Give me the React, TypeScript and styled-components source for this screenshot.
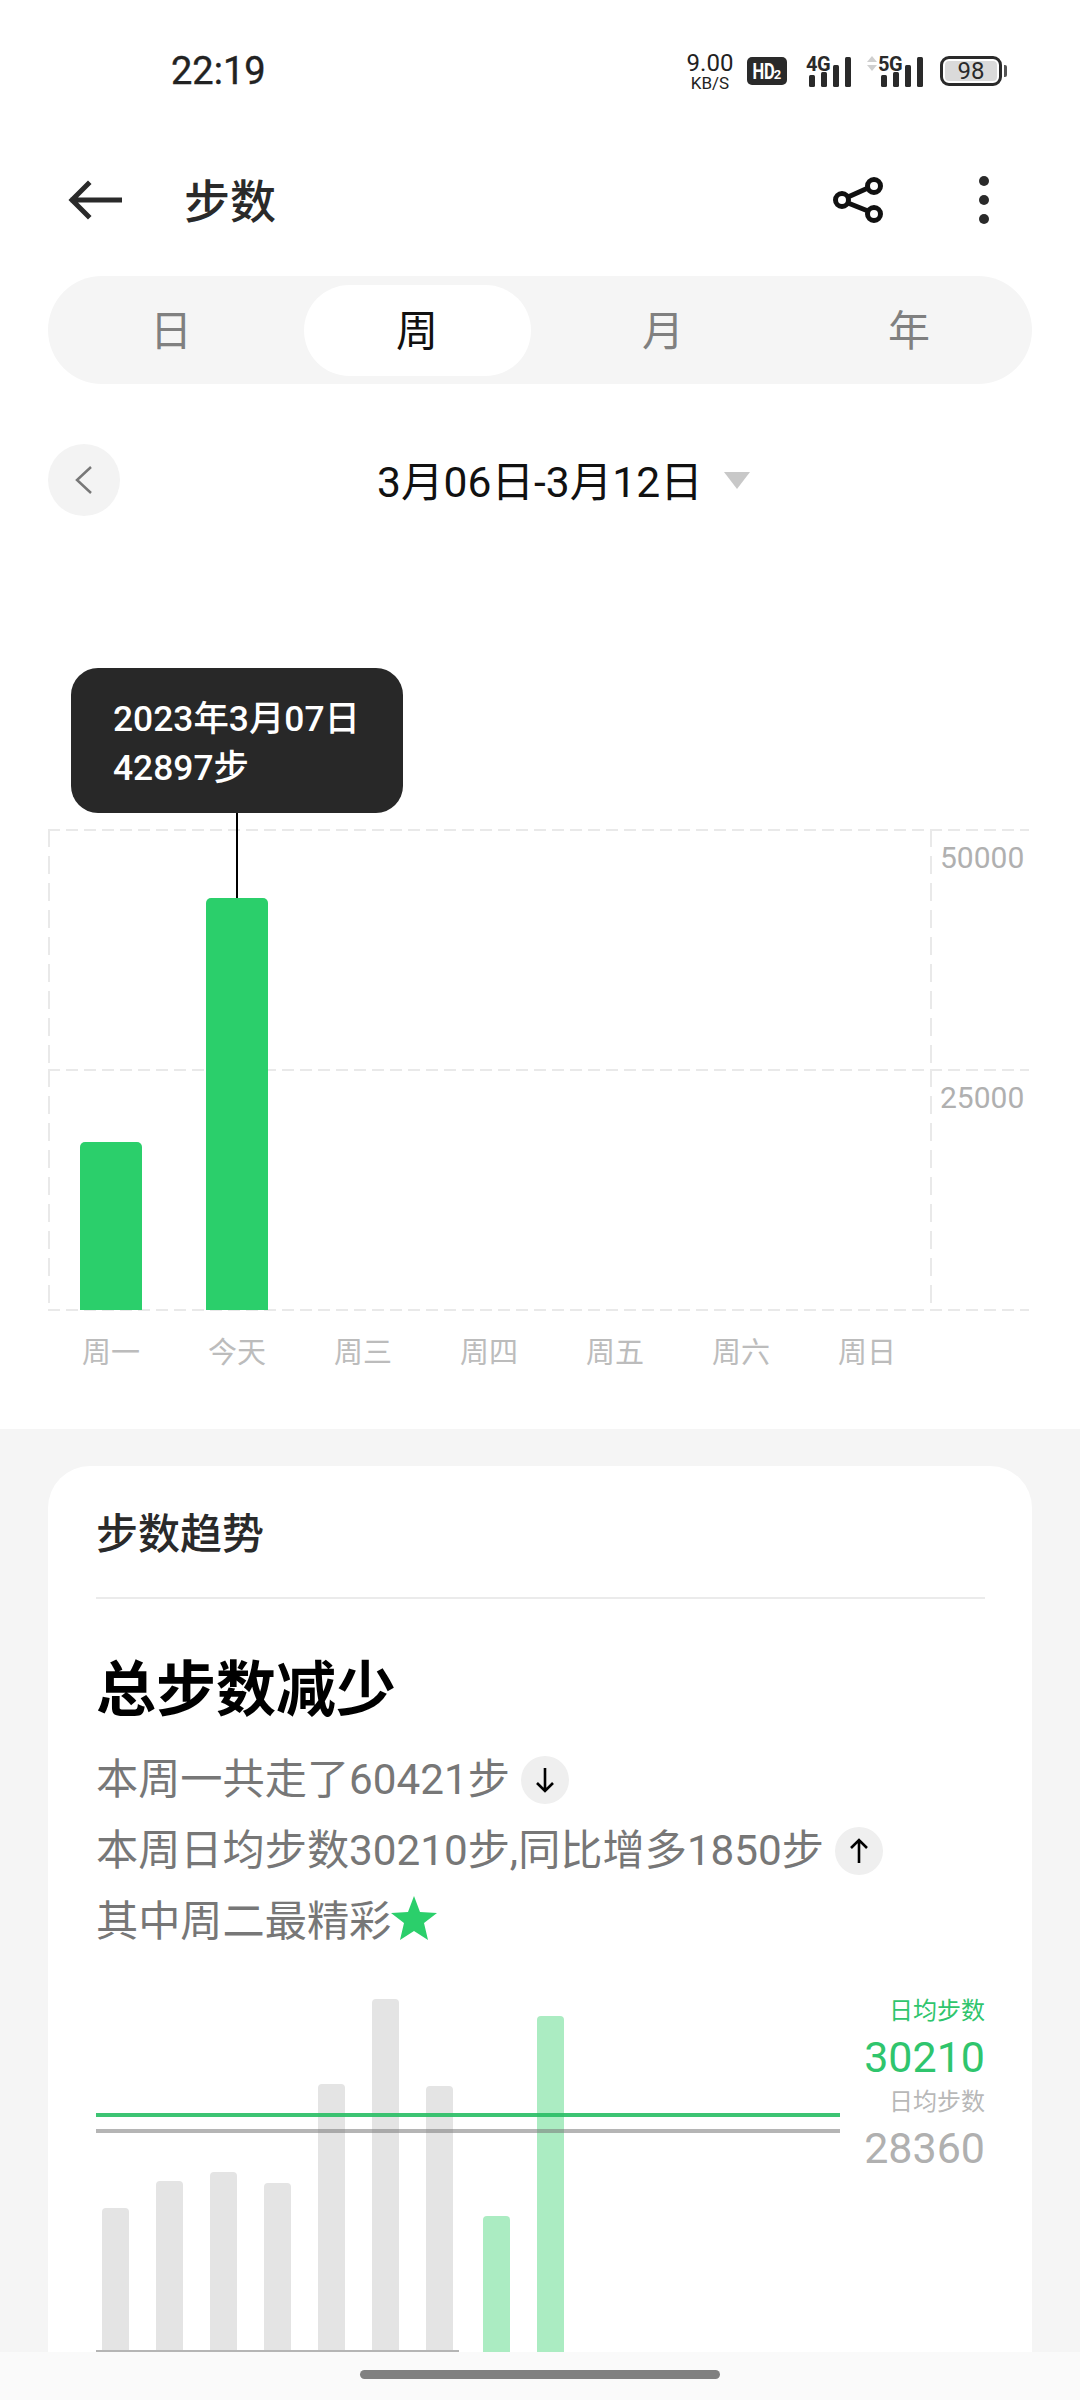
import React from "react"
import styled, { createGlobalStyle } from "styled-components"

const GlobalStyle = createGlobalStyle`
  html, body {
    margin: 0;
    padding: 0;
    background: #fff;
  }
  body {
    font-family: Roboto, "Noto Sans CJK SC", sans-serif;
    color: #222;
  }
`

const Page = styled.div`
  position: relative;
  width: 1080px;
  height: 2400px;
  overflow: hidden;
  background: #fff;
`

/* status bar */
const StatusBar = styled.div`
  height: 142px;
  display: flex;
  align-items: center;
  padding: 0 73px 0 171px;
`
const Time = styled.div`
  font-size: 38px;
  color: #222;
  -webkit-text-stroke: 0.4px #222;
`
const StatusRight = styled.div`
  margin-left: auto;
  display: flex;
  align-items: center;
`
const Speed = styled.div`
  display: flex;
  flex-direction: column;
  align-items: center;
  color: #222;
  width: 52px;
`
const SpeedValue = styled.span`
  font-size: 24px;
  line-height: 24px;
`
const SpeedUnit = styled.span`
  font-size: 17px;
  line-height: 17px;
`
const HdBadge = styled.div`
  width: 40px;
  height: 28px;
  margin-left: 11px;
  border-radius: 5px;
  background: #2a2a2a;
  color: #fff;
  font-weight: 700;
  display: flex;
  align-items: center;
  justify-content: center;
`
const HdText = styled.span`
  font-size: 22px;
  letter-spacing: -0.5px;
  margin: 0 -4px;
  transform: scaleX(0.75);
`
const HdSub = styled.span`
  font-size: 13px;
  padding-top: 7px;
`
const SignalWrap = styled.div<{ $arrows?: boolean }>`
  position: relative;
  width: ${(p) => (p.$arrows ? 60 : 48)}px;
  height: 34px;
  margin-left: ${(p) => (p.$arrows ? 12 : 19)}px;
  display: flex;
  justify-content: flex-end;
`
const SignalLabel = styled.span<{ $arrows?: boolean }>`
  position: absolute;
  left: ${(p) => (p.$arrows ? 12 : 0)}px;
  top: 1px;
  font-size: 20px;
  line-height: 18px;
  font-weight: 700;
  color: #2a2a2a;
  letter-spacing: -0.5px;
`
const Battery = styled.div`
  position: relative;
  box-sizing: border-box;
  width: 62px;
  height: 30px;
  margin-left: 14px;
  border: 3px solid #2a2a2a;
  border-radius: 9px;
  padding: 2px;
`
const BatteryFill = styled.div`
  height: 100%;
  border-radius: 4px;
  background: #dadada;
  color: #2a2a2a;
  font-size: 24px;
  line-height: 20px;
  text-align: center;
`
const BatteryTip = styled.div`
  width: 3px;
  height: 12px;
  margin-left: 2px;
  border-radius: 0 2px 2px 0;
  background: #555;
`

/* header */
const Header = styled.div`
  height: 116px;
  display: flex;
  align-items: center;
  padding: 0 0 0 68px;
`
const Title = styled.div`
  margin-left: 62px;
  padding-bottom: 5px;
  font-size: 46px;
  font-weight: 500;
  color: #2a2a2a;
`
const HeaderActions = styled.div`
  margin-left: auto;
  padding-right: 91px;
  display: flex;
  align-items: center;
  gap: 95px;
`

/* period tabs */
const Tabs = styled.div`
  margin: 18px 48px 0;
  height: 108px;
  border-radius: 54px;
  background: #f5f5f5;
  display: grid;
  grid-template-columns: repeat(4, 1fr);
  align-items: center;
  justify-items: center;
`
const Tab = styled.div<{ $active?: boolean }>`
  box-sizing: border-box;
  width: 227px;
  height: 91px;
  padding-bottom: 5px;
  border-radius: 46px;
  display: flex;
  align-items: center;
  justify-content: center;
  font-size: 42px;
  background: ${(p) => (p.$active ? "#fff" : "transparent")};
  color: ${(p) => (p.$active ? "#111" : "#808080")};
`

/* date range */
const DateRow = styled.div`
  margin: 60px 48px 0;
  height: 72px;
  display: flex;
  align-items: center;
`
const PrevButton = styled.div`
  width: 72px;
  height: 72px;
  border-radius: 50%;
  background: #f3f3f3;
  display: flex;
  align-items: center;
  justify-content: center;
`
const DateLabel = styled.div`
  margin-left: 257px;
  padding-bottom: 3px;
  font-size: 42.6px;
  color: #111;
  white-space: nowrap;
`
const DateCaret = styled.div`
  margin-left: 21px;
  width: 0;
  height: 0;
  border-left: 13px solid transparent;
  border-right: 13px solid transparent;
  border-top: 17px solid #c8c8c8;
`

/* main chart */
const Plot = styled.div`
  position: relative;
  margin: 313px 0 0 48px;
  width: 981px;
  height: 481px;
`
const dashH = "repeating-linear-gradient(90deg, #e9e9e9 0 12px, transparent 12px 18px)"
const dashV = "repeating-linear-gradient(180deg, #e9e9e9 0 18px, transparent 18px 27px)"
const PlotRow = styled.div`
  height: 240px;
  background:
    ${dashH} top left / 100% 2px no-repeat,
    ${dashV} top left / 2px 100% no-repeat,
    ${dashV} top left 882px / 2px 100% no-repeat;
  padding: 14px 0 0 892px;
  box-sizing: border-box;
`
const PlotBase = styled.div`
  height: 2px;
  background: ${dashH};
`
const AxisValue = styled.div`
  font-size: 30px;
  line-height: 30px;
  color: #b0b0b0;
`
const BarLayer = styled.div`
  position: absolute;
  left: 0;
  top: 0;
  bottom: 0;
  display: grid;
  grid-template-columns: repeat(7, 126px);
  justify-items: center;
  align-items: end;
`
const Bar = styled.div<{ $h: number }>`
  position: relative;
  width: 62px;
  height: ${(p) => p.$h}px;
  border-radius: 5px 5px 0 0;
  background: #2bcf6b;
`
const Stem = styled.div`
  position: absolute;
  left: 30px;
  bottom: 100%;
  width: 2px;
  height: 85px;
  background: #000;
`
const Tip = styled.div`
  position: absolute;
  left: -135px;
  bottom: calc(100% + 85px);
  box-sizing: border-box;
  width: 332px;
  height: 145px;
  padding: 27px 0 0 42px;
  border-radius: 27px;
  background: #282828;
  color: #fff;
  font-size: 35.4px;
  font-weight: 500;
  line-height: 49px;
  white-space: nowrap;
`
const WeekAxis = styled.div`
  margin: 23px 0 0 48px;
  width: 882px;
  display: grid;
  grid-template-columns: repeat(7, 126px);
  justify-items: center;
`
const WeekLabel = styled.div`
  font-size: 29px;
  line-height: 40px;
  color: #bcbcbc;
`

/* trend card */
const Section = styled.div`
  position: absolute;
  top: 1429px;
  left: 0;
  right: 0;
  bottom: 0;
  background: #f5f5f5;
  padding: 37px 48px 0;
`
const Card = styled.div`
  height: 1000px;
  padding: 0 47px 0 48px;
  border-radius: 42px 42px 0 0;
  background: #fff;
`
const CardTitle = styled.div`
  height: 133px;
  box-sizing: border-box;
  border-bottom: 2px solid #ebebeb;
  padding-bottom: 3px;
  display: flex;
  align-items: center;
  font-size: 42px;
  font-weight: 500;
  color: #2a2a2a;
`
const Headline = styled.div`
  margin-top: 50px;
  font-size: 60px;
  font-weight: 700;
  line-height: 84px;
  color: #000;
`
const Lines = styled.div`
  margin-top: 7px;
`
const Line = styled.div`
  height: 71px;
  display: flex;
  align-items: center;
  font-size: 42.2px;
  color: #777;
  white-space: nowrap;
`
const ArrowChip = styled.span`
  width: 48px;
  height: 48px;
  margin: 8px 0 0 11px;
  border-radius: 50%;
  background: #efefef;
  display: inline-flex;
  align-items: center;
  justify-content: center;
`
const TrendRow = styled.div`
  margin-top: 37px;
  display: flex;
`
const TrendChart = styled.div`
  position: relative;
  width: 744px;
  height: 362px;
  display: flex;
  align-items: flex-end;
  padding-left: 6px;
  box-sizing: border-box;
`
const TrendBar = styled.div<{ $h: number; $green?: boolean }>`
  width: 27px;
  height: ${(p) => p.$h}px;
  margin-right: 27px;
  border-radius: 4px 4px 0 0;
  background: ${(p) => (p.$green ? "#abecc2" : "#e4e4e4")};
  &:nth-child(8) {
    margin-left: 3px;
  }
`
const Baseline = styled.div`
  position: absolute;
  left: 0;
  bottom: 0;
  width: 363px;
  height: 2px;
  background: #b5b5b5;
`
const AvgLine = styled.div<{ $top: number; $h: number; $color: string }>`
  position: absolute;
  left: 0;
  right: 0;
  top: ${(p) => p.$top}px;
  height: ${(p) => p.$h}px;
  background: ${(p) => p.$color};
`
const TrendStats = styled.div`
  flex: 1;
  text-align: right;
  margin-top: -1px;
`
const StatLabel = styled.div<{ $green?: boolean }>`
  font-size: 24px;
  line-height: 45px;
  color: ${(p) => (p.$green ? "#2fc56d" : "#b8b8b8")};
`
const StatValue = styled.div<{ $green?: boolean }>`
  font-size: 43px;
  line-height: 46px;
  color: ${(p) => (p.$green ? "#2fc56d" : "#b0b0b0")};
`

/* gesture bar */
const NavBar = styled.div`
  position: absolute;
  left: 0;
  right: 0;
  bottom: 0;
  height: 48px;
  background: #fafafa;
  display: flex;
  justify-content: center;
  padding-top: 18px;
  box-sizing: border-box;
`
const NavHandle = styled.div`
  width: 360px;
  height: 9px;
  border-radius: 5px;
  background: #808080;
`

const Signal = ({ label, arrows }: { label: string; arrows?: boolean }) => (
  <SignalWrap $arrows={arrows}>
    {arrows && (
      <svg width="12" height="20" viewBox="0 0 12 20" fill="#cfcfcf" style={{ position: "absolute", left: 0, top: 1 }}>
        <polygon points="1,7 11,7 6,1" />
        <polygon points="1,10 11,10 6,16" />
      </svg>
    )}
    <SignalLabel $arrows={arrows}>{label}</SignalLabel>
    <svg width="48" height="34" viewBox="0 0 48 34" fill="#2a2a2a">
      <rect x="3" y="21" width="6" height="12" rx="1.5" />
      <rect x="15" y="18" width="6" height="15" rx="1.5" />
      <rect x="27" y="11" width="6" height="22" rx="1.5" />
      <rect x="39" y="3" width="6" height="30" rx="1.5" />
    </svg>
  </SignalWrap>
)

const BackIcon = () => (
  <svg width="54" height="40" viewBox="0 0 54 40" fill="none" stroke="#2a2a2a" strokeWidth="5" strokeLinecap="square">
    <path d="M53 20H5M20 4L4 20l16 16" />
  </svg>
)

const ShareIcon = () => (
  <svg width="52" height="46" viewBox="0 0 52 46" fill="none" stroke="#111" strokeWidth="5">
    <circle cx="10" cy="23" r="6.5" />
    <circle cx="42" cy="9" r="6.5" />
    <circle cx="42" cy="37" r="6.5" />
    <path d="M16 20l20-9M16 26l20 8" />
  </svg>
)

const MoreIcon = () => (
  <svg width="10" height="48" viewBox="0 0 10 48" fill="#2a2a2a">
    <circle cx="5" cy="5" r="5" />
    <circle cx="5" cy="24" r="5" />
    <circle cx="5" cy="43" r="5" />
  </svg>
)

const ChevronIcon = () => (
  <svg width="20" height="28" viewBox="0 0 20 28" fill="none" stroke="#777" strokeWidth="2.5">
    <path d="M17 1L3 14l14 13" />
  </svg>
)

const ArrowIcon = ({ up }: { up?: boolean }) => (
  <svg width="22" height="26" viewBox="0 0 22 26" fill="none" stroke="#000" strokeWidth="2.6">
    {up ? <path d="M11 25V2M3 10l8-8 8 8" /> : <path d="M11 1v23M3 16l8 8 8-8" />}
  </svg>
)

const StarIcon = () => (
  <svg width="46" height="44" viewBox="0 0 46 44" fill="#2bcf6b">
    <polygon points="23,0 29,16 46,17 33,27 37,44 23,35 9,44 13,27 0,17 17,16" />
  </svg>
)

const weekDays = ["周一", "今天", "周三", "周四", "周五", "周六", "周日"]
const trendGray = [144, 171, 180, 169, 268, 353, 266]
const trendGreen = [136, 336]

export default function App() {
  return (
    <Page>
      <GlobalStyle />
      <StatusBar>
        <Time>22:19</Time>
        <StatusRight>
          <Speed>
            <SpeedValue>9.00</SpeedValue>
            <SpeedUnit>KB/S</SpeedUnit>
          </Speed>
          <HdBadge>
            <HdText>HD</HdText>
            <HdSub>2</HdSub>
          </HdBadge>
          <Signal label="4G" />
          <Signal label="5G" arrows />
          <Battery>
            <BatteryFill>98</BatteryFill>
          </Battery>
          <BatteryTip />
        </StatusRight>
      </StatusBar>

      <Header>
        <BackIcon />
        <Title>步数</Title>
        <HeaderActions>
          <ShareIcon />
          <MoreIcon />
        </HeaderActions>
      </Header>

      <Tabs>
        <Tab>日</Tab>
        <Tab $active>周</Tab>
        <Tab>月</Tab>
        <Tab>年</Tab>
      </Tabs>

      <DateRow>
        <PrevButton>
          <ChevronIcon />
        </PrevButton>
        <DateLabel>3月06日-3月12日</DateLabel>
        <DateCaret />
      </DateRow>

      <Plot>
        <PlotRow>
          <AxisValue>50000</AxisValue>
        </PlotRow>
        <PlotRow>
          <AxisValue>25000</AxisValue>
        </PlotRow>
        <PlotBase />
        <BarLayer>
          <Bar $h={168} />
          <Bar $h={412}>
            <Stem />
            <Tip>
              2023年3月07日
              <br />
              42897步
            </Tip>
          </Bar>
        </BarLayer>
      </Plot>
      <WeekAxis>
        {weekDays.map((d) => (
          <WeekLabel key={d}>{d}</WeekLabel>
        ))}
      </WeekAxis>

      <Section>
        <Card>
          <CardTitle>步数趋势</CardTitle>
          <Headline>总步数减少</Headline>
          <Lines>
            <Line>
              本周一共走了60421步
              <ArrowChip>
                <ArrowIcon />
              </ArrowChip>
            </Line>
            <Line>
              本周日均步数30210步,同比增多1850步
              <ArrowChip>
                <ArrowIcon up />
              </ArrowChip>
            </Line>
            <Line>
              其中周二最精彩
              <StarIcon />
            </Line>
          </Lines>
          <TrendRow>
            <TrendChart>
              {trendGray.map((h, i) => (
                <TrendBar key={i} $h={h} />
              ))}
              {trendGreen.map((h, i) => (
                <TrendBar key={i} $h={h} $green />
              ))}
              <Baseline />
              <AvgLine $top={123} $h={4} $color="rgba(40, 190, 100, 0.9)" />
              <AvgLine $top={139} $h={4} $color="rgba(120, 120, 120, 0.55)" />
            </TrendChart>
            <TrendStats>
              <StatLabel $green>日均步数</StatLabel>
              <StatValue $green>30210</StatValue>
              <StatLabel>日均步数</StatLabel>
              <StatValue>28360</StatValue>
            </TrendStats>
          </TrendRow>
        </Card>
      </Section>

      <NavBar>
        <NavHandle />
      </NavBar>
    </Page>
  )
}
